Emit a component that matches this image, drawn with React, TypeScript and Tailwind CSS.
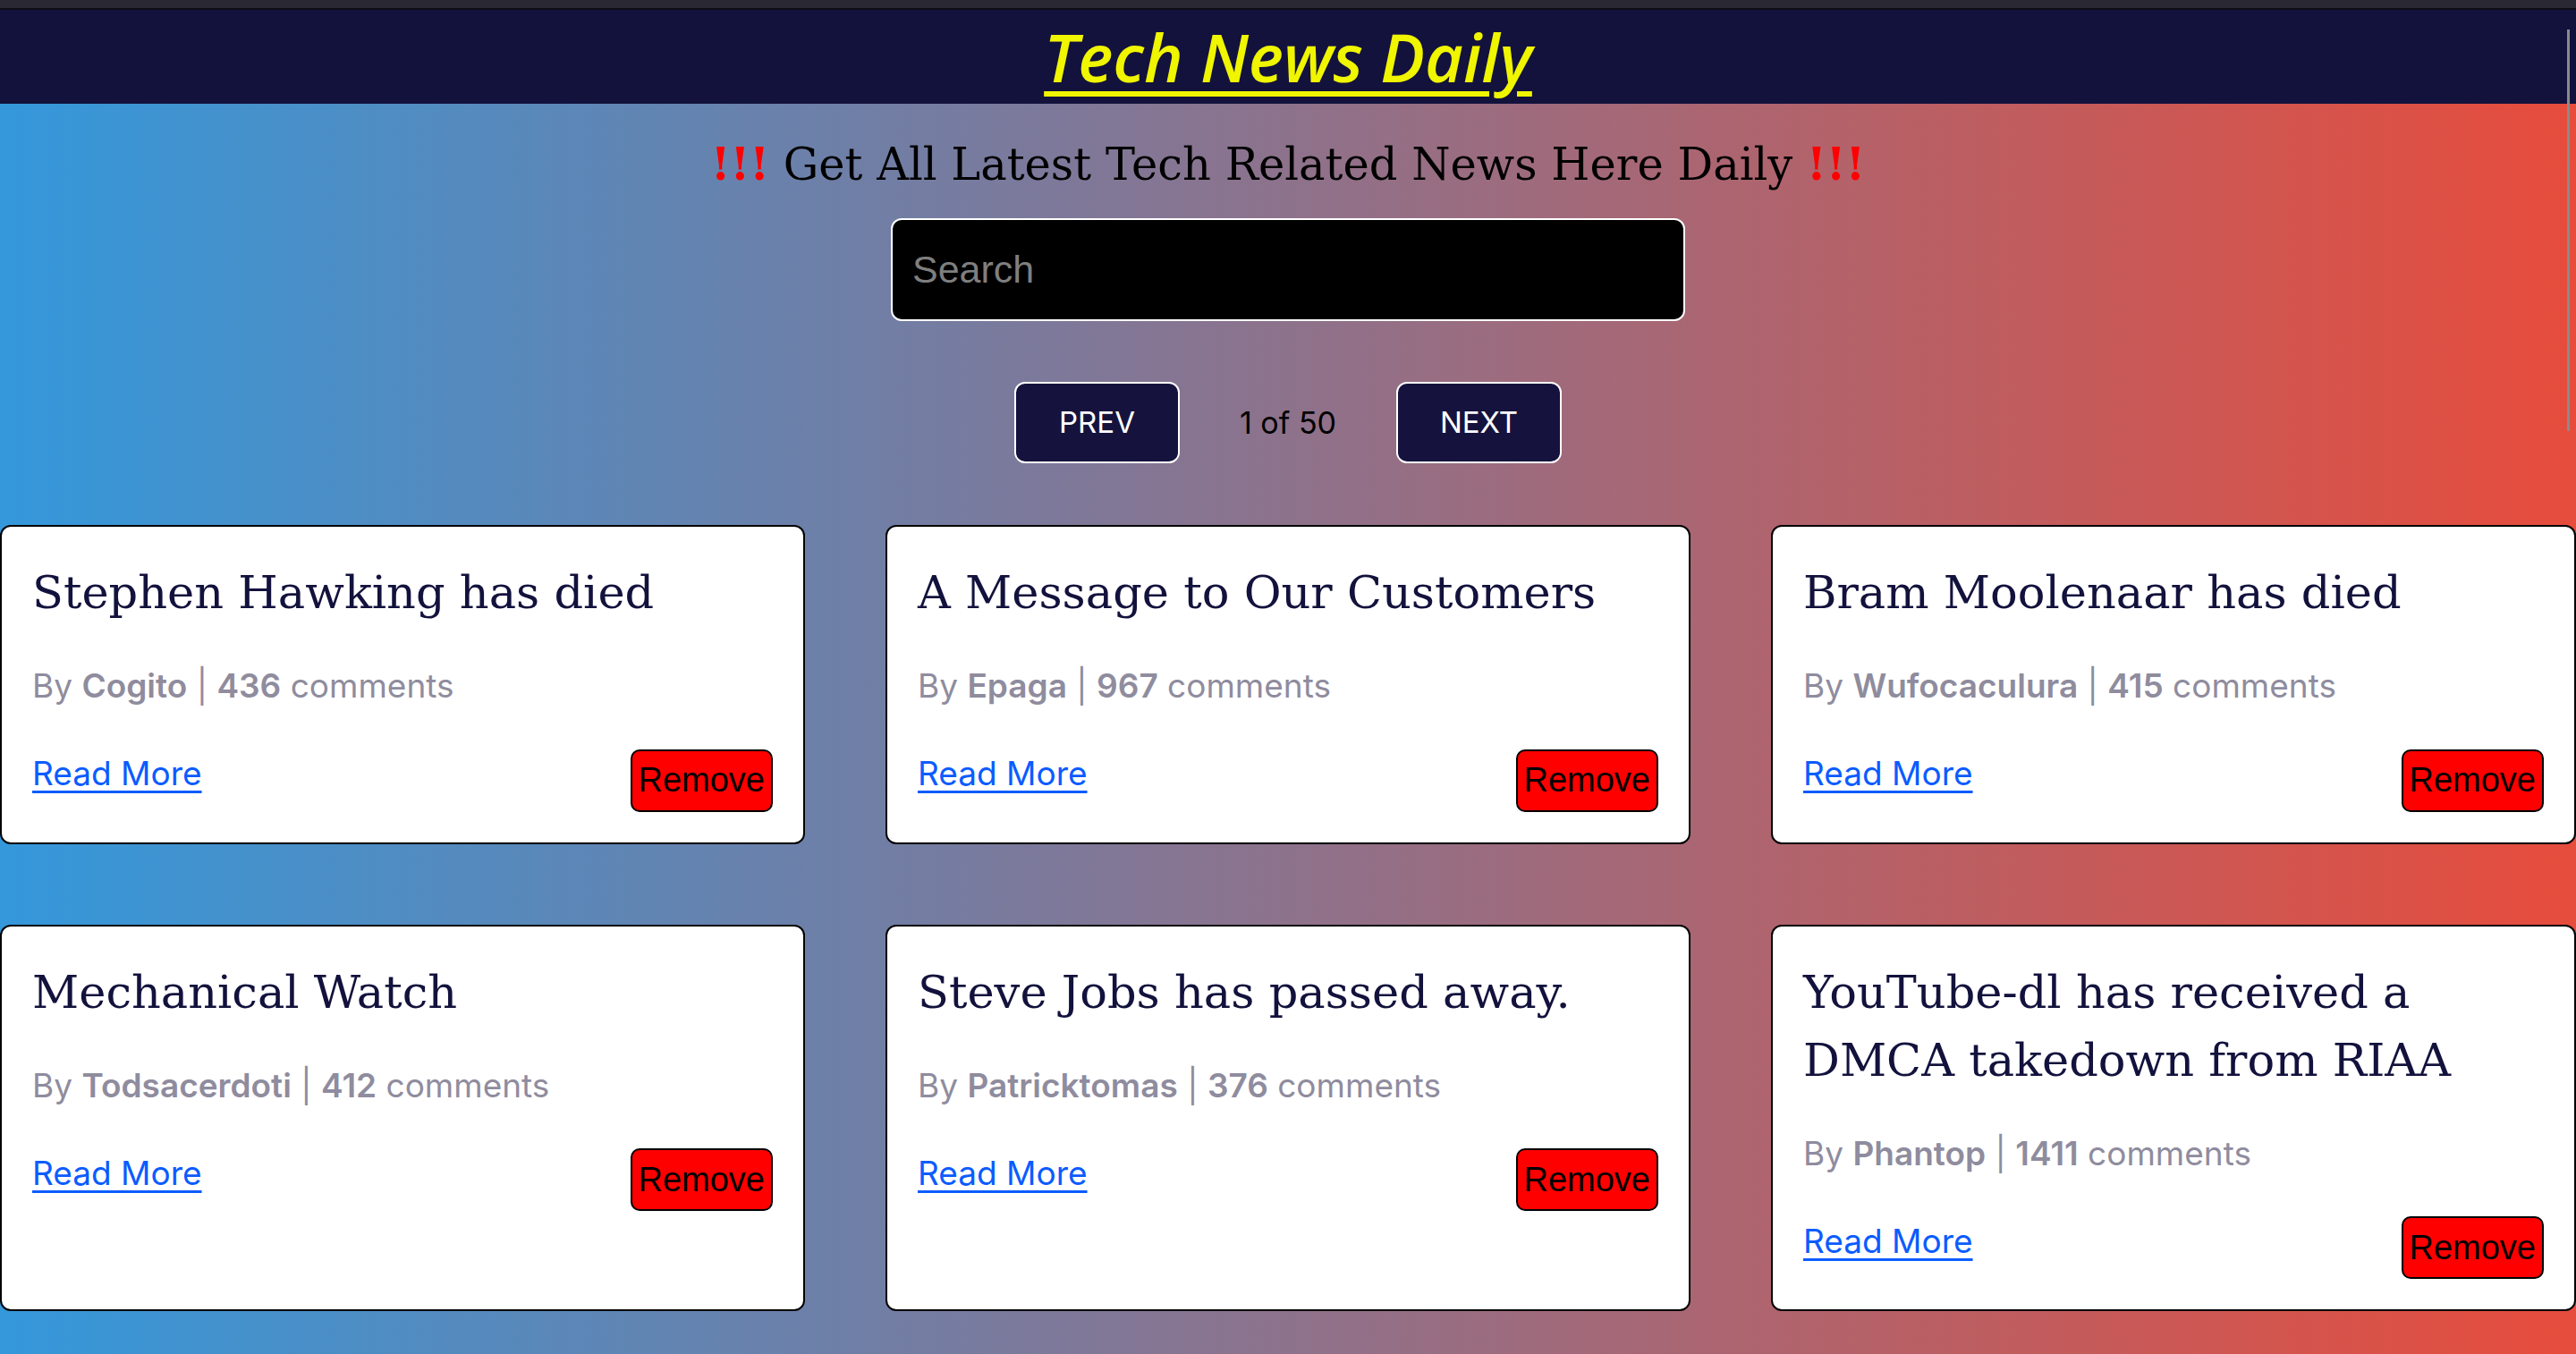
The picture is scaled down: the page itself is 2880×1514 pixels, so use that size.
import React from 'react';

type Story = {
  id: number;
  title: string;
  author: string;
  comments: number;
};

const stories: Story[] = [
  { id: 1, title: 'Stephen Hawking has died', author: 'Cogito', comments: 436 },
  { id: 2, title: 'A Message to Our Customers', author: 'Epaga', comments: 967 },
  { id: 3, title: 'Bram Moolenaar has died', author: 'Wufocaculura', comments: 415 },
  { id: 4, title: 'Mechanical Watch', author: 'Todsacerdoti', comments: 412 },
  { id: 5, title: 'Steve Jobs has passed away.', author: 'Patricktomas', comments: 376 },
  { id: 6, title: 'YouTube-dl has received a DMCA takedown from RIAA', author: 'Phantop', comments: 1411 },
];

const sans = "font-['Inter','Noto_Sans',sans-serif]";

function StoryCard({ story }: { story: Story }) {
  return (
    <div className="bg-white border-2 border-black rounded-[12px] px-[34px] pt-[36px] pb-[33px]">
      <h2 className="font-['DejaVu_Serif','Liberation_Serif',serif] text-[51px] leading-[76px] text-[#13123d]">
        {story.title}
      </h2>
      <p className={`${sans} mt-[39px] text-[37px] leading-[54px] text-[#8f8c9e]`}>
        By <span className="font-semibold">{story.author}</span> |{' '}
        <span className="font-semibold">{story.comments}</span> comments
      </p>
      <div className="mt-[43px] flex items-center justify-between">
        <a
          href="#"
          className={`${sans} mb-[16px] text-[37px] text-[#0b5cff] underline decoration-[3px] underline-offset-[6px]`}
        >
          Read More
        </a>
        <button className="h-[70px] px-[7px] bg-[#ff0000] border-2 border-black rounded-[10px] font-['Liberation_Sans',Arial,sans-serif] text-[38px] text-black">
          Remove
        </button>
      </div>
    </div>
  );
}

export default function App() {
  return (
    <div className="min-h-screen bg-[linear-gradient(to_right,#3498db,#e74c3c)]">
      <div className="h-[9px] bg-[#2a2933]" />
      <div className="h-[2px] bg-[#0d0c12]" />
      <header className="h-[105px] bg-[#13123d] flex items-center justify-center">
        <h1 className="font-['Open_Sans','DejaVu_Sans',sans-serif] italic font-semibold text-[74px] leading-none text-[#f0f500] underline decoration-[6px] underline-offset-[10px]">
          Tech News Daily
        </h1>
      </header>

      <main className="flex flex-col items-center">
        <p className="mt-[36px] font-['DejaVu_Serif','Liberation_Serif',serif] text-[49.5px] leading-[64px] text-black">
          <span className="text-[#ff0000] font-bold">!!!</span> Get All Latest Tech Related News Here Daily{' '}
          <span className="text-[#ff0000] font-bold">!!!</span>
        </p>

        <input
          type="text"
          placeholder="Search"
          className="mt-[28px] w-[888px] h-[115px] px-[22px] bg-black border-2 border-white rounded-[12px] font-['Liberation_Sans',Arial,sans-serif] text-[43px] text-white placeholder:text-[#7f7f7f] outline-none"
        />

        <div className="mt-[68px] flex items-center gap-[67px]">
          <button className={`${sans} w-[185px] h-[91px] bg-[#15133d] border-2 border-white rounded-[12px] text-[33px] text-white`}>
            PREV
          </button>
          <span className={`${sans} text-[34px] text-black`}>1 of 50</span>
          <button className={`${sans} w-[185px] h-[91px] bg-[#15133d] border-2 border-white rounded-[12px] text-[33px] text-white`}>
            NEXT
          </button>
        </div>

        <div className="mt-[69px] w-full grid grid-cols-3 gap-x-[90px] gap-y-[90px] pb-[60px]">
          {stories.map((story) => (
            <StoryCard key={story.id} story={story} />
          ))}
        </div>
      </main>

      <div className="fixed top-[33px] right-[7px] w-[3px] h-[449px] bg-[#8a8a8a]" />
    </div>
  );
}
